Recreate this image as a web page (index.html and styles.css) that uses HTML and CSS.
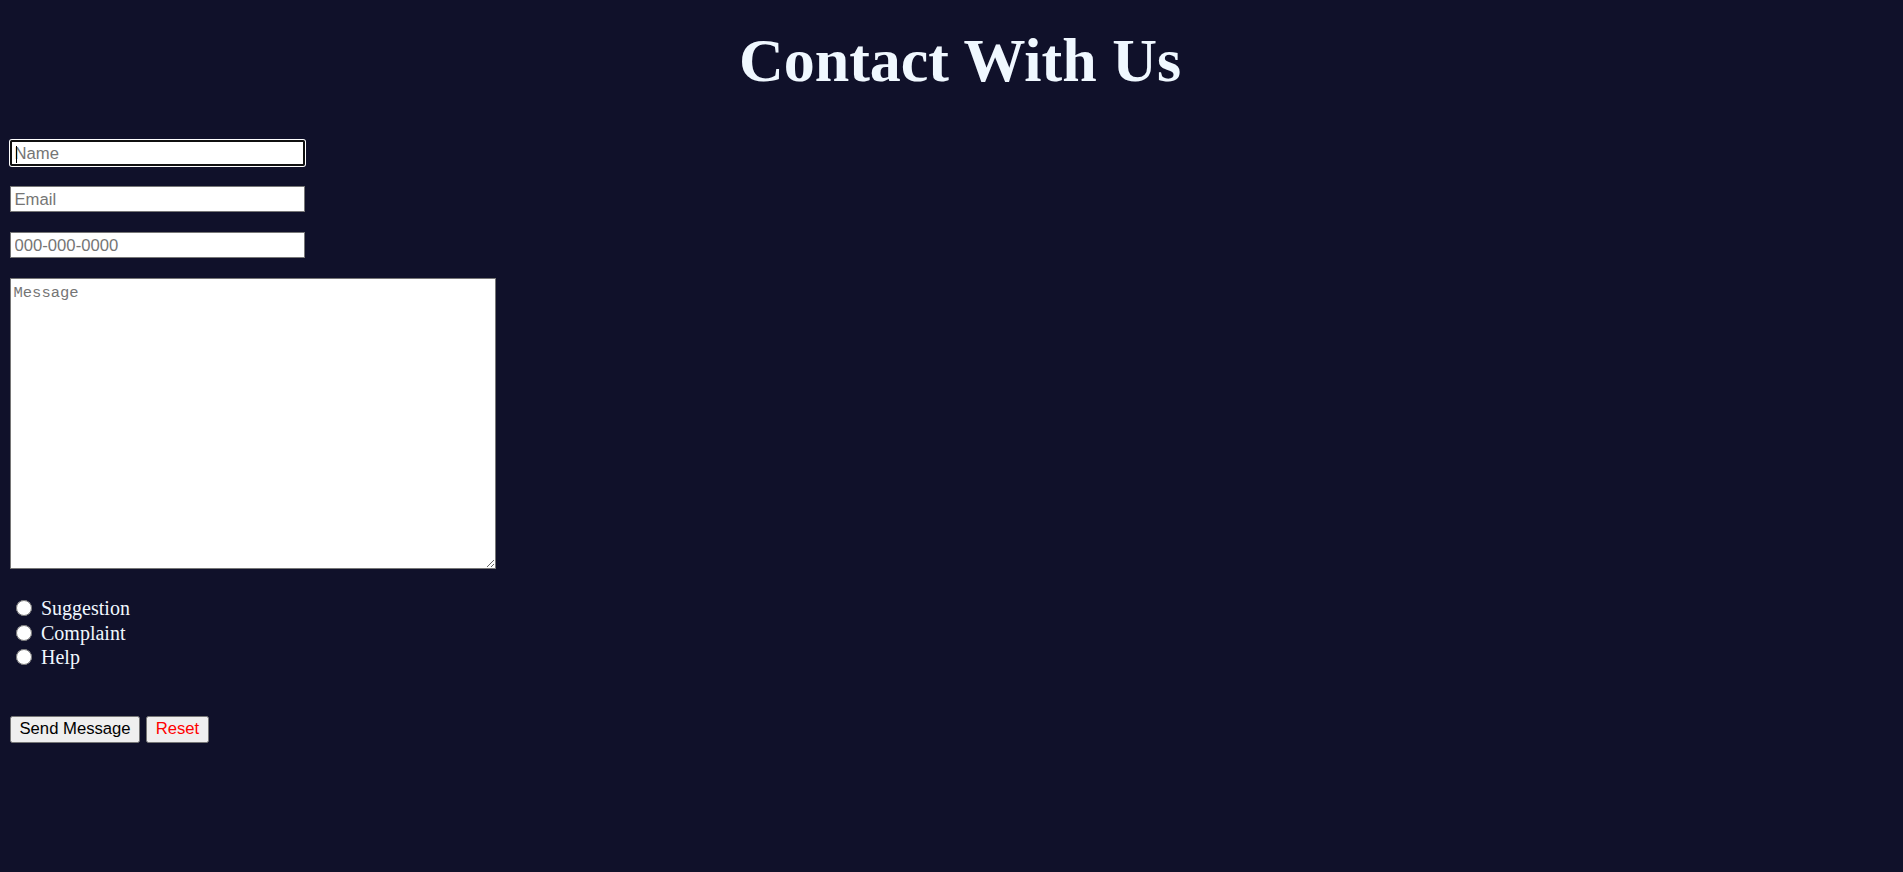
FILE: index.html
```html
<!DOCTYPE html>
<html lang="en">
<head>
<meta charset="utf-8">
<title>Contact With Us</title>
<link rel="stylesheet" href="styles.css">
</head>
<body>
<h1 class="title">Contact With Us</h1>
<form class="contact-form">
  <div class="fields">
    <span class="field-wrap">
      <input class="field field-focus" type="text" placeholder="Name">
      <span class="caret"></span>
    </span>
    <input class="field" type="email" placeholder="Email">
    <input class="field" type="tel" placeholder="000-000-0000">
    <textarea class="message" placeholder="Message"></textarea>
  </div>
  <div class="options">
    <label class="option"><input class="radio" type="radio" name="kind">Suggestion</label>
    <label class="option"><input class="radio" type="radio" name="kind">Complaint</label>
    <label class="option"><input class="radio" type="radio" name="kind">Help</label>
  </div>
  <div class="actions">
    <button class="btn" type="submit">Send Message</button>
    <button class="btn btn-reset" type="reset">Reset</button>
  </div>
</form>
</body>
</html>
```
FILE: styles.css
```css
html, body {
  background: #10112a;
}
body {
  margin: 0;
  padding: 0 10px;
  font-family: "Liberation Serif", "Times New Roman", serif;
  color: #f0f8ff;
}
.title {
  margin: 0;
  padding: 24px 0 0 17px;
  font-size: 62px;
  line-height: 72px;
  font-weight: bold;
  text-align: center;
  color: #f0f8ff;
}
.contact-form {
  margin-top: 44px;
  display: flex;
  flex-direction: column;
  align-items: flex-start;
}
.fields {
  display: flex;
  flex-direction: column;
  align-items: flex-start;
  gap: 20px;
}
.field-wrap {
  position: relative;
  display: block;
  height: 26px;
}
.field {
  box-sizing: border-box;
  display: block;
  width: 295px;
  height: 26px;
  margin: 0;
  padding: 1px 3.5px 0;
  border: 1px solid #767676;
  background: #fff;
  font-family: "Liberation Sans", Arial, sans-serif;
  font-size: 16.67px;
  color: #000;
  outline: none;
}
.field::placeholder,
.message::placeholder {
  color: #757575;
  opacity: 1;
}
.field-focus {
  border-radius: 2px;
  outline: 2px solid #101010;
  outline-offset: -2px;
  box-shadow: 0 0 0 1px #fff;
}
.caret {
  position: absolute;
  left: 5.5px;
  top: 6px;
  width: 1px;
  height: 17px;
  background: #000;
}
.message {
  box-sizing: border-box;
  display: block;
  width: 486px;
  height: 291px;
  margin: 0;
  padding: 4.5px 2.5px 2.5px;
  border: 1px solid #767676;
  background: #fff;
  font-family: "Liberation Mono", "Courier New", monospace;
  font-size: 15.5px;
  color: #000;
  outline: none;
}
.options {
  margin-top: 27px;
  display: flex;
  flex-direction: column;
}
.option {
  display: flex;
  align-items: center;
  height: 24.6px;
  line-height: 24.6px;
  font-size: 20px;
  color: #f0f8ff;
}
.radio {
  width: 16px;
  height: 16px;
  margin: 0 9px 0 6px;
}
.actions {
  margin-top: 46px;
  display: flex;
  gap: 6px;
}
.btn {
  box-sizing: border-box;
  height: 27px;
  margin: 0;
  padding: 0 8.5px;
  border: 1px solid #767676;
  border-radius: 2.5px;
  background: #efefef;
  font-family: "Liberation Sans", Arial, sans-serif;
  font-size: 16.67px;
  color: #000;
}
.btn-reset {
  color: #ff0000;
}
```
